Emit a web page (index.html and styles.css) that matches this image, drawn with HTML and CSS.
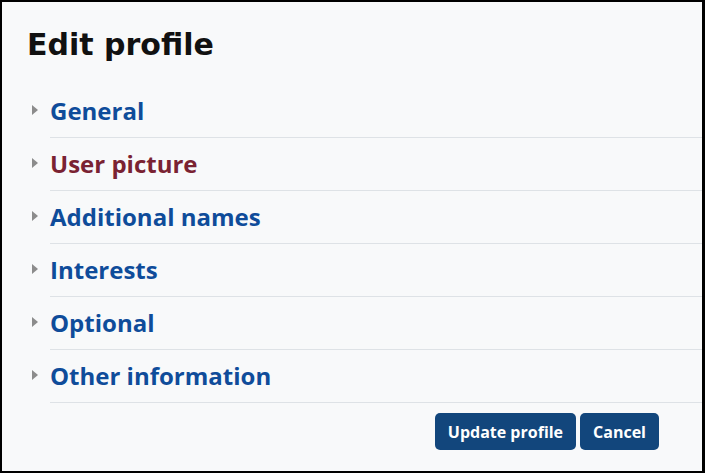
FILE: index.html
```html
<!DOCTYPE html>
<html>
<head>
<meta charset="utf-8">
<link rel="stylesheet" href="styles.css">
</head>
<body>
<div class="frame">
  <h1 class="title">Edit profile</h1>
  <div class="sections">
    <div class="section"><span class="caret"></span><span class="label">General</span></div>
    <div class="section"><span class="caret"></span><span class="label active">User picture</span></div>
    <div class="section"><span class="caret"></span><span class="label">Additional names</span></div>
    <div class="section"><span class="caret"></span><span class="label">Interests</span></div>
    <div class="section"><span class="caret"></span><span class="label">Optional</span></div>
    <div class="section"><span class="caret"></span><span class="label">Other information</span></div>
  </div>
  <div class="actions">
    <button class="btn">Update profile</button>
    <button class="btn">Cancel</button>
  </div>
</div>
</body>
</html>
```

FILE: styles.css
```css
html, body {
  margin: 0;
  padding: 0;
  background: #000;
}
.frame {
  box-sizing: border-box;
  width: 705px;
  height: 473px;
  border-style: solid;
  border-color: #000;
  border-width: 2px 3px 2px 2px;
  background: #f8f9fa;
  padding: 0 0 0 25px;
  font-family: "Open Sans", sans-serif;
}
.title {
  margin: 0;
  padding: 23px 0 0 0;
  font-family: "DejaVu Sans", sans-serif;
  font-weight: 700;
  font-size: 30px;
  line-height: 40px;
  color: #111;
  height: 60px;
}
.sections {
  display: flex;
  flex-direction: column;
}
.section {
  display: flex;
  align-items: center;
  height: 52px;
  border-bottom: 1px solid #dee2e6;
  margin-left: 23px;
  position: relative;
}
.caret {
  position: absolute;
  left: -18px;
  top: 50%;
  margin-top: -6px;
  width: 0;
  height: 0;
  border-top: 5px solid transparent;
  border-bottom: 5px solid transparent;
  border-left: 6px solid #8c8c8c;
}
.label {
  font-weight: 700;
  font-size: 24px;
  color: #0f4c9a;
  margin-top: -2px;
}
.label.active {
  color: #7a2232;
}
.actions {
  display: flex;
  justify-content: flex-end;
  gap: 4px;
  padding: 10px 43px 0 0;
}
.btn {
  font-family: "Open Sans", sans-serif;
  font-weight: 700;
  font-size: 16px;
  color: #fff;
  background: #12467c;
  border: none;
  border-radius: 5px;
  height: 37px;
  padding: 0 13px;
}
```
